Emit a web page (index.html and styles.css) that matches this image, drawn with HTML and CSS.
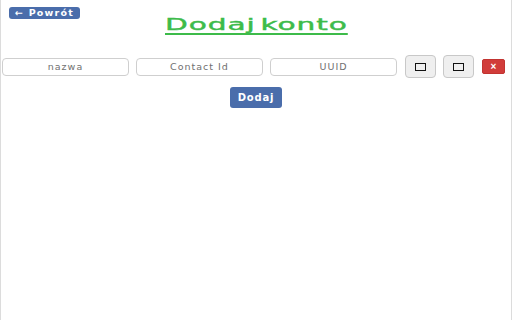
FILE: index.html
```html
<!DOCTYPE html>
<html lang="pl">

<head>
    <meta charset="utf-8">
    <link rel="stylesheet" href="styles.css">
</head>

<body class="page">
    <div class="top-bar">
        <button class="button-back" type="button">&larr; Powrót</button>
    </div>
    <h1 class="title"><span class="title-text">Dodaj konto</span></h1>
    <div class="form-row">
        <input type="text" class="field" placeholder="nazwa" />
        <input type="text" class="field" placeholder="Contact Id" />
        <input type="text" class="field" placeholder="UUID" />
        <button class="button-square first" type="button"><span class="box-icon"></span></button>
        <button class="button-square" type="button"><span class="box-icon"></span></button>
        <button class="button-remove" type="button">&times;</button>
    </div>
    <div class="button-container">
        <button class="button-add" type="button">Dodaj</button>
    </div>
</body>

</html>
```

FILE: styles.css
```css
html,
body {
    height: 100%;
}

.page {
    margin: 0;
    box-sizing: border-box;
    border-left: 1px solid #dcdcdc;
    border-right: 1px solid #dcdcdc;
    font-family: "DejaVu Sans", Verdana, sans-serif;
    background: #fff;
}

.top-bar {
    padding: 7px 0 0 8px;
    height: 12px;
}

.button-back {
    background-color: #4a6dab;
    color: white;
    border: none;
    border-radius: 3px;
    font-family: "DejaVu Sans", sans-serif;
    font-weight: bold;
    font-size: 9.5px;
    letter-spacing: 1.2px;
    padding: 0 6px 0 6px;
    height: 12px;
    line-height: 12px;
    cursor: pointer;
    vertical-align: top;
}

.title {
    margin: 0;
    text-align: center;
    height: 36px;
    line-height: 12px;
    font-size: 16px;
    font-weight: normal;
}

.title-text {
    display: inline-block;
    color: #3dbb4a;
    letter-spacing: 0.5px;
    word-spacing: -3px;
    -webkit-text-stroke: 0.4px #3dbb4a;
    text-decoration: underline;
    text-decoration-thickness: 2px;
    text-underline-offset: 3px;
    transform: scaleX(1.85);
}

/* (margin-top: 0 puts the row right under the title) */
.form-row {
    display: flex;
    align-items: center;
    padding-left: 1px;
    gap: 7px;
}

.field {
    width: 127px;
    height: 18px;
    box-sizing: border-box;
    border: 1px solid #cfcfcf;
    border-radius: 4px;
    text-align: center;
    font-family: "DejaVu Sans", sans-serif;
    font-size: 9.5px;
    letter-spacing: 1px;
    padding: 0;
}

.field::placeholder {
    color: #707070;
}

.button-square {
    width: 31px;
    height: 23px;
    background: #efefef;
    border: 1px solid #c8c8c8;
    border-radius: 4px;
    display: flex;
    align-items: center;
    justify-content: center;
    padding: 0;
}

.button-square.first {
    margin-left: 1px;
}

.box-icon {
    width: 9px;
    height: 6px;
    border: 1.5px solid #111;
}

.button-remove {
    width: 23px;
    height: 15px;
    margin-left: 1px;
    background: #d13c3a;
    color: white;
    border: 1px solid #c23431;
    border-radius: 2px;
    font-size: 10px;
    font-weight: bold;
    padding: 0;
    line-height: 12px;
}

.button-container {
    display: flex;
    justify-content: center;
    padding-top: 9px;
}

.button-add {
    background-color: #4a6dab;
    color: white;
    border: none;
    border-radius: 3px;
    font-family: "DejaVu Sans", sans-serif;
    font-weight: bold;
    font-size: 10px;
    letter-spacing: 0.8px;
    width: 52px;
    height: 21px;
    padding: 0;
    cursor: pointer;
}
```
